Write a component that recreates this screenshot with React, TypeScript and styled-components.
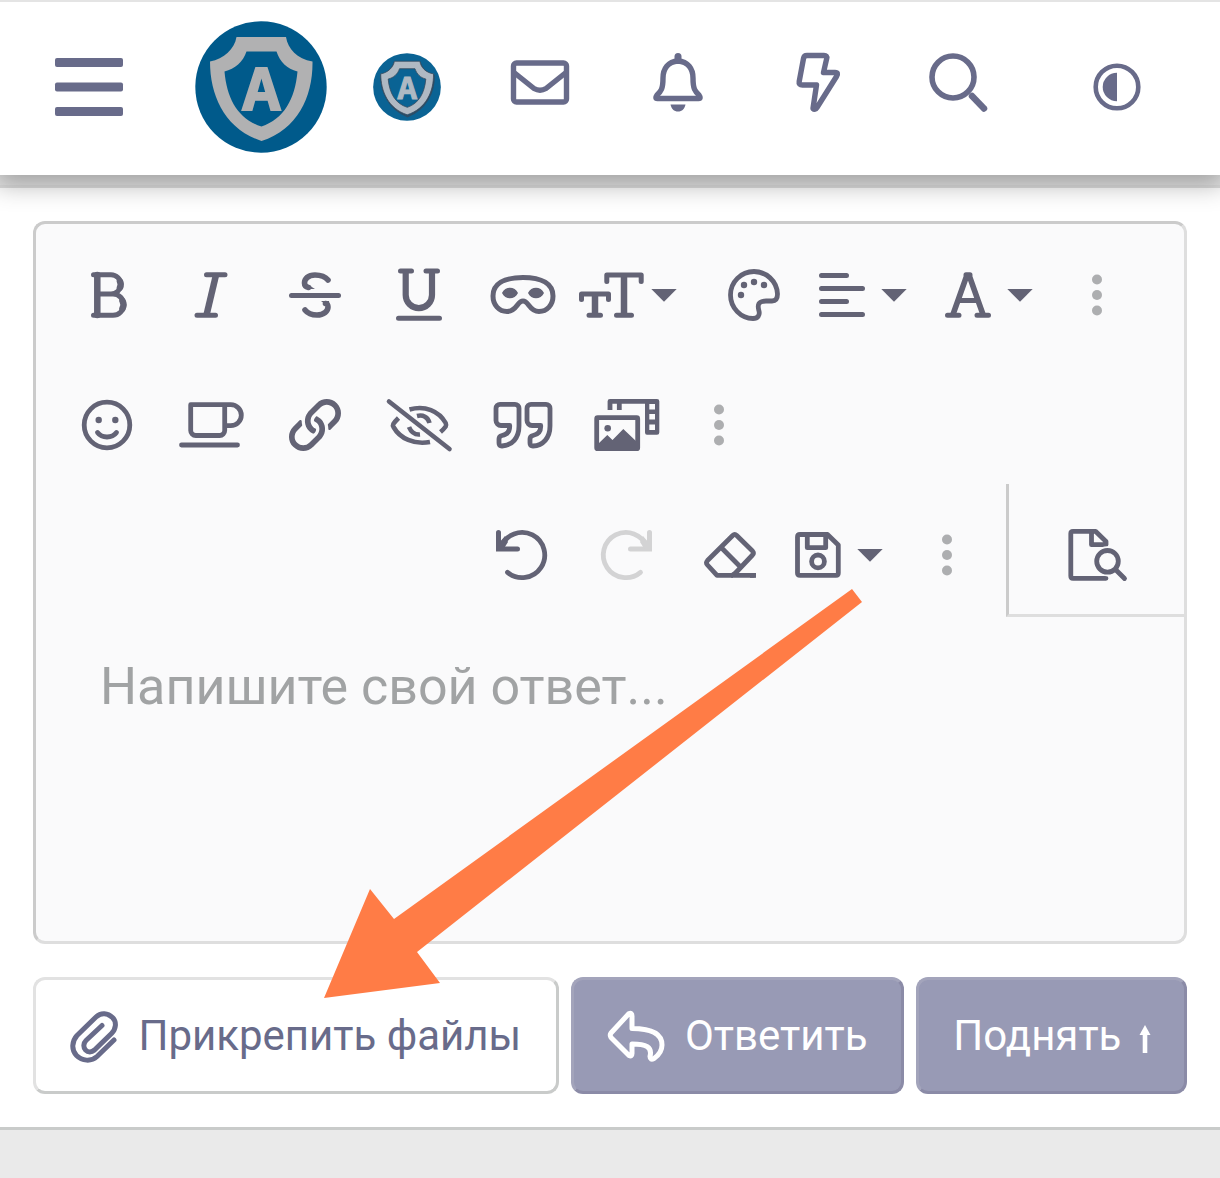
import React from 'react';
import styled, { createGlobalStyle } from 'styled-components';

const INK = '#636375';
const BRAND = '#686b8a';

const GlobalStyle = createGlobalStyle`
  * { box-sizing: border-box; }
  body {
    margin: 0;
    background: #eaeaea;
    font-family: Roboto, "Noto Sans", sans-serif;
  }
  button, textarea { font: inherit; margin: 0; padding: 0; border: 0; background: none; }
  button { cursor: pointer; }
`;

const Header = styled.header`
  position: relative;
  z-index: 1;
  display: flex;
  height: 175px;
  padding: 0 12px 3px 0;
  border-top: 2px solid #e4e4e4;
  background: #fff;
  box-shadow: 0 6px 24px 4px rgba(0, 0, 0, 0.3);
`;

const Slot = styled.div<{ $grow: number }>`
  flex: ${(p) => p.$grow} 1 0;
  display: flex;
  align-items: center;
  justify-content: center;
`;

const HeaderButton = styled.button`
  display: flex;
  color: ${BRAND};
`;

const HomeLink = styled.a`
  display: flex;
`;

const Strip = styled.div`
  height: 13px;
  border-bottom: 3px solid #dedede;
  background: #e6e6e6;
`;

const Composer = styled.main`
  position: relative;
  padding: 33px 33px 33px;
  border-bottom: 3px solid #c9cbca;
  background: #fff;
`;

const Editor = styled.section`
  display: flex;
  flex-direction: column;
  border: 3px solid;
  border-color: #cbcbcb #dedede #dedede #cbcbcb;
  border-radius: 12px;
  background: #fafafb;
`;

const ToolRow = styled.div<{ $height: number }>`
  display: flex;
  height: ${(p) => p.$height}px;
  padding: 6px 20px 0;
`;

const ActionRow = styled.div`
  display: flex;
  justify-content: flex-end;
  height: 133px;
`;

const ActionGroup = styled.div`
  display: flex;
  padding: 9px 20px 0 0;
`;

const Tool = styled.button<{ $muted?: boolean }>`
  display: flex;
  align-items: center;
  justify-content: center;
  width: 104px;
  color: ${(p) => (p.$muted ? '#d3d3d4' : INK)};
`;

const MenuTool = styled(Tool)`
  justify-content: flex-start;
  width: 126px;
`;

const MoreTool = styled(Tool)`
  width: 78px;
  color: #adaeb0;
`;

const PreviewTool = styled(Tool)`
  width: 178px;
  padding-top: 12px;
  border-left: 3px solid #cbcbcb;
  border-bottom: 3px solid #dedede;
`;

const Reply = styled.textarea`
  display: block;
  width: 100%;
  height: 324px;
  padding: 34px 64px;
  border: 0;
  outline: 0;
  resize: none;
  color: ${INK};
  font-size: 52px;
  line-height: 72px;
  &::placeholder { color: #a1a3a4; opacity: 1; }
`;

const Actions = styled.div`
  display: flex;
  gap: 12px;
  margin-top: 33px;
`;

const Action = styled.button<{ $grow: number; $primary?: boolean }>`
  flex: ${(p) => p.$grow} 1 0;
  display: flex;
  align-items: center;
  justify-content: center;
  gap: 20px;
  height: 117px;
  border: 3px solid;
  border-color: ${(p) => (p.$primary ? '#a3a4bb #8b8ba7 #8b8ba7 #a3a4bb' : '#e2e2e2 #c9cbca #c9cbca #e2e2e2')};
  border-radius: 12px;
  background: ${(p) => (p.$primary ? '#989ab5' : '#fff')};
  color: ${(p) => (p.$primary ? '#fff' : BRAND)};
  font-size: 42px;
  white-space: nowrap;
`;

const Pointer = styled.svg`
  position: absolute;
  top: 401px;
  left: 324px;
  pointer-events: none;
`;

type IconProps = { w?: number; h?: number; sw?: number; children: React.ReactNode };

const Icon = ({ w = 72, h = 64, sw = 4.8, children }: IconProps) => (
  <svg
    width={w}
    height={h}
    viewBox={`${-w / 2} ${-h / 2} ${w} ${h}`}
    fill="none"
    stroke="currentColor"
    strokeWidth={sw}
    strokeLinecap="round"
    strokeLinejoin="round"
    overflow="visible"
    aria-hidden="true"
  >
    {children}
  </svg>
);

const Caret = () => (
  <Icon w={32}>
    <path d="M-12.7 -6H12.7L0 6.7Z" fill="currentColor" stroke="none" />
  </Icon>
);

const Dots = () => (
  <Icon w={20}>
    <g fill="currentColor" stroke="none">
      <circle cx="0" cy="-15.5" r="5" />
      <circle cx="0" cy="0" r="5" />
      <circle cx="0" cy="15.5" r="5" />
    </g>
  </Icon>
);

const More = () => (
  <MoreTool type="button" aria-label="Ещё">
    <Dots />
  </MoreTool>
);

const Shield = ({ size, metal, shade }: { size: number; metal: string; shade?: boolean }) => (
  <svg width={size} height={size} viewBox="-66 -66 132 132" role="img" aria-label="A">
    <circle r="65.7" fill={shade ? '#0a6394' : '#005a8b'} />
    {shade && (
      <path
        d="M-24 -47H25C27 -36 38 -25 52 -22C53 10 36 43 1 57C-34 43 -50 10 -50 -22C-37 -25 -27 -36 -24 -47Z"
        fill="none"
        stroke="#2c4d66"
        strokeWidth="4"
      />
    )}
    <path
      fill={metal}
      stroke={shade ? '#34495c' : 'none'}
      strokeWidth="1.5"
      fillRule="evenodd"
      d="M-24.5 -50H25C27 -38 36 -28 51.5 -25.5C52 9 37 42 0.5 54C-36 42 -51 9 -51 -25.5C-37 -28 -26.5 -38 -24.5 -50ZM-14.5 -35.5C-18 -25 -26 -18 -36.5 -15.5C-34 12 -23 32 0.5 39.5C23 32 34 12 36.5 -15.5C26 -18 19 -25 15.5 -35.5Z"
    />
    <text
      x="0.5"
      y="23"
      textAnchor="middle"
      fontFamily='"Liberation Mono", monospace'
      fontWeight="700"
      fontSize="63"
      fill={metal}
      stroke={metal}
      strokeWidth="2"
    >
      A
    </text>
  </svg>
);

const LINK_HALF =
  'M314.222 197.78c51.091 51.091 54.377 132.287 9.75 187.16-6.242 7.73-2.784 3.865-84.94 86.02-54.696 54.696-143.266 54.745-197.99 0-54.711-54.69-54.734-143.255 0-197.99 32.773-32.773 51.835-51.899 63.409-63.457 7.463-7.452 20.331-2.354 20.486 8.192a173.31 173.31 0 0 0 4.746 37.828c.966 4.029-.272 8.269-3.202 11.198L80.632 312.57c-32.755 32.775-32.887 85.892 0 118.8 32.775 32.755 85.892 32.887 118.8 0l75.19-75.2c32.718-32.725 32.777-86.013 0-118.79a83.722 83.722 0 0 0-22.814-16.229c-4.623-2.233-7.182-7.25-6.561-12.346 1.356-11.122 6.296-21.885 14.815-30.405l4.375-4.375c3.625-3.626 9.177-4.594 13.76-2.294 12.999 6.524 25.187 15.211 36.025 26.049z';

const QUOTE =
  'M-24 -20.7H-9a4 4 0 0 1 4 4V1C-5 13 -12 20.5 -22 21C-24.5 21 -25 20 -25 18V14C-25 12 -24 11 -22 10.5C-17 9.5 -14.3 6 -14.3 1.5V0.5H-23a5 5 0 0 1 -5 -5V-16.7a4 4 0 0 1 4 -4Z';

const UndoShape = () => (
  <>
    <path d="M-21 -8A22.6 22.6 0 1 1 -14.5 17.3" />
    <path d="M-23.5 -22.5V-6H-4.5" strokeLinejoin="miter" strokeWidth="5" />
    <path d="M-23 -5L-23 -12L-17 -19L-14 -13L-19 -5Z" fill="currentColor" stroke="none" />
  </>
);

export default function App() {
  return (
    <>
      <GlobalStyle />
      <Header>
        <Slot $grow={178}>
          <HeaderButton type="button" aria-label="Меню">
            <Icon>
              <g fill="currentColor" stroke="none">
                <rect x="-34" y="-29" width="68" height="9" rx="2" />
                <rect x="-34" y="-4.5" width="68" height="9" rx="2" />
                <rect x="-34" y="20" width="68" height="9" rx="2" />
              </g>
            </Icon>
          </HeaderButton>
        </Slot>
        <Slot $grow={165}>
          <HomeLink href="#home">
            <Shield size={132} metal="#b1b1b2" />
          </HomeLink>
        </Slot>
        <Slot $grow={127}>
          <HeaderButton type="button" aria-label="Профиль">
            <Shield size={68} metal="#afb9c3" shade />
          </HeaderButton>
        </Slot>
        <Slot $grow={139}>
          <HeaderButton type="button" aria-label="Сообщения">
            <Icon sw={5.4}>
              <rect x="-26.5" y="-24" width="53" height="39" rx="3" />
              <path d="M-26 -14.5L-6 1.5Q0 5 6 1.5L26 -14.5" />
            </Icon>
          </HeaderButton>
        </Slot>
        <Slot $grow={139}>
          <HeaderButton type="button" aria-label="Уведомления">
            <Icon sw={5.4}>
              <path d="M-1 -26C-11 -25.5 -16 -18 -16 -9C-16 2 -18 4.5 -22 8Q-24.5 11.5 -21.5 11.5H19.5Q22.5 11.5 20 8C16 4.5 14 2 14 -9C14 -18 9 -25.5 -1 -26Z" />
              <path d="M-1 -30.5V-27" strokeWidth="7" />
              <path d="M-8.5 17.5H6.5C5.5 22 3 24.5 -1 24.5S-7.5 22 -8.5 17.5Z" fill="currentColor" stroke="none" />
            </Icon>
          </HeaderButton>
        </Slot>
        <Slot $grow={139}>
          <HeaderButton type="button" aria-label="Новое">
            <Icon sw={5.4}>
              <path d="M-11 -31.5H6Q9.5 -31.5 8.7 -28.5L5.5 -14.5H17Q21 -14.5 18.5 -10.5L-1 20.5Q-3 23.5 -5 21.5L-1.5 -2H-15.5Q-19.5 -2 -18.8 -5.5L-14.5 -28.5Q-14 -31.5 -11 -31.5Z" />
            </Icon>
          </HeaderButton>
        </Slot>
        <Slot $grow={139}>
          <HeaderButton type="button" aria-label="Поиск">
            <Icon sw={5.6}>
              <circle cx="-4" cy="-10" r="21" />
              <path d="M15 9L27 21.5" strokeWidth="6.5" />
            </Icon>
          </HeaderButton>
        </Slot>
        <Slot $grow={182}>
          <HeaderButton type="button" aria-label="Сменить тему">
            <Icon sw={4.6}>
              <circle r="21.3" />
              <path d="M0 -14.3V14.3A14.3 14.3 0 0 1 0 -14.3Z" fill="currentColor" stroke="none" />
            </Icon>
          </HeaderButton>
        </Slot>
      </Header>
      <Strip />
      <Composer>
        <Editor>
          <ToolRow $height={136}>
            <Tool type="button" aria-label="Жирный">
              <Icon sw={5}>
                <path d="M-14.5 -20.3H3A9.65 9.65 0 0 1 3 -1H-10M3 -1H5A10.65 10.65 0 0 1 5 20.3H-14.5" />
                <path d="M-10.7 -20V20M12 -13.5Q13.5 -10.5 12 -7.5M14.5 6Q16.5 9.5 14.5 13.5" strokeWidth="6.5" />
              </Icon>
            </Tool>
            <Tool type="button" aria-label="Курсив">
              <Icon sw={5}>
                <path d="M-5.5 -20.3H13M-15 20.3H3.5" />
                <path d="M4 -20L-5.5 20" strokeWidth="6.5" strokeLinecap="butt" />
              </Icon>
            </Tool>
            <Tool type="button" aria-label="Зачёркнутый">
              <Icon sw={5.6}>
                <path d="M-24.5 0.5H22.5" strokeWidth="5" />
                <path d="M12 -15C8 -20 3 -20 -1 -20C-8 -20 -11.5 -16 -11.5 -12C-11.5 -9.5 -10 -8 -7.5 -7.5" />
                <path d="M-11 15C-7 20 -2 20 1 20C8 20 12 16 12 12C12 9.5 11.5 9 9.5 8.5" />
                <path d="M-13 -12L-9 -6H-1L-9 -11ZM14 13L13 6H5L10 10Z" fill="currentColor" stroke="none" />
              </Icon>
            </Tool>
            <Tool type="button" aria-label="Подчёркнутый">
              <Icon sw={5}>
                <path d="M-19.5 -24H-8.5M6 -24H17.5M-21.5 23.3H19.5" />
                <path d="M-14.3 -23V0A13 13 0 0 0 12 0V-23" strokeWidth="6.2" />
              </Icon>
            </Tool>
            <Tool type="button" aria-label="Спойлер">
              <Icon sw={5}>
                <path d="M-1 -17.5C-20 -17.5 -31 -11 -31 1C-31 10 -25 16.5 -17 16.5C-7 16.5 -7 6 -1 6S5 16.5 15 16.5C23 16.5 29 10 29 1C29 -11 18 -17.5 -1 -17.5Z" />
                <path d="M-22 -2C-19 -9 -9 -9 -6 -2C-9 5 -19 5 -22 -2ZM4 -2C7 -9 17 -9 20 -2C17 5 7 5 4 -2Z" fill="currentColor" stroke="none" />
              </Icon>
            </Tool>
            <MenuTool type="button" aria-label="Размер шрифта">
              <Icon sw={5}>
                <path d="M-5.2 -13.5V-20H29.2V-13.5M4.5 20.3H19.5M-30.5 4.5V-1H-3.5V4.5M-23 20.3H-11.5" />
                <path d="M12 -20V20M-17 -1V20" strokeWidth="6.5" strokeLinecap="butt" />
              </Icon>
              <Caret />
            </MenuTool>
            <Tool type="button" aria-label="Цвет">
              <Icon>
                <path d="M0 -23.5A23.5 23.5 0 0 0 -23.5 0C-23.5 13 -13 23.5 -1 23.5C4 23.5 6 20 5 16C4 12 3.5 11 5 8.5C6.5 6 9 6 12 6H18C22 6 23.5 3 23.5 -1C23 -14 12 -23.5 0 -23.5Z" />
                <g fill="currentColor" stroke="none">
                  <circle cx="-13" cy="0" r="3.2" />
                  <circle cx="-10" cy="-10" r="3.2" />
                  <circle cx="0" cy="-13" r="3.2" />
                  <circle cx="10" cy="-10" r="3.2" />
                </g>
              </Icon>
            </Tool>
            <MenuTool type="button" aria-label="Выравнивание">
              <Icon sw={5}>
                <path d="M-20.5 -19.5H4.5M-20.5 -6.5H20.5M-20.5 6.5H4.5M-20.5 19.5H20.5" />
              </Icon>
              <Caret />
            </MenuTool>
            <MenuTool type="button" aria-label="Шрифт">
              <Icon sw={5}>
                <path d="M-20.5 20.3H-9M9 20.3H20.5M-9 5.5H9M-2 -20.3H2" />
                <path d="M-15.2 20L-1 -20M15.2 20L1 -20" strokeWidth="5.6" strokeLinecap="butt" />
              </Icon>
              <Caret />
            </MenuTool>
            <More />
          </ToolRow>
          <ToolRow $height={124}>
            <Tool type="button" aria-label="Смайлы">
              <Icon>
                <circle cx="-1" r="22.8" />
                <path d="M-10.5 7.5C-6 13.5 4 13.5 8.5 7.5" />
                <circle cx="-9.3" cy="-5" r="3.2" fill="currentColor" stroke="none" />
                <circle cx="7.3" cy="-5" r="3.2" fill="currentColor" stroke="none" />
              </Icon>
            </Tool>
            <Tool type="button" aria-label="Оффтоп">
              <Icon>
                <path d="M-21.3 -20.3H12.7V5.5A5 5 0 0 1 7.7 10.5H-16.3A5 5 0 0 1 -21.3 5.5ZM12.7 -20.3H18.8A10.5 10.5 0 0 1 18.8 0.7H12.7M-30.5 20H25.5" />
              </Icon>
            </Tool>
            <Tool type="button" aria-label="Ссылка">
              <Icon>
                <g transform="translate(-27 -26) scale(0.1016)" fill="currentColor" stroke="none">
                  <path d={LINK_HALF} />
                  <path d={LINK_HALF} transform="rotate(180 256 256)" />
                </g>
              </Icon>
            </Tool>
            <Tool type="button" aria-label="Скрытый текст">
              <Icon sw={4.6}>
                <path d="M-31 -23.5L29.5 24" />
                <g strokeLinecap="butt">
                  <path d="M-10.5 -15.5C5 -20 19 -14 25.7 -2Q26.5 0 25.7 1.5Q23.5 4.5 20.5 7" />
                  <path d="M-21.5 -7Q-25 -3.5 -26.7 -1Q-27.5 0.5 -26.5 2C-20 13.5 -6 20 10 17" />
                  <path d="M-3 -9C3 -10.5 8 -8 9.5 -2M-11 2C-9 7 -6 10 0 9.5" />
                </g>
              </Icon>
            </Tool>
            <Tool type="button" aria-label="Цитата">
              <Icon>
                <path d={QUOTE} />
                <path d={QUOTE} transform="translate(31 0)" />
              </Icon>
            </Tool>
            <Tool type="button" aria-label="Медиа">
              <Icon>
                <rect x="-31.3" y="-7.3" width="41" height="31" rx="1" />
                <path d="M-31 20L-20.7 10L-15.5 15L-4.7 4L9 17V24H-31Z" fill="currentColor" stroke="none" />
                <circle cx="-20.3" cy="3.3" r="3.3" fill="currentColor" stroke="none" />
                <path d="M-18 -15V-23.7H20M-8.7 -15V-23" strokeLinecap="butt" />
                <path
                  d="M17 -26H29Q31.3 -26 31.3 -23.7V7.5Q31.3 9.7 29 9.7H19Q17 9.7 17 7.5ZM21.3 -21V-15.5H27V-21ZM21.3 -11V-5.5H27V-11ZM21.3 -0.5V5H27V-0.5Z"
                  fill="currentColor"
                  fillRule="evenodd"
                  stroke="none"
                />
              </Icon>
            </Tool>
            <More />
          </ToolRow>
          <ActionRow>
            <ActionGroup>
              <Tool type="button" aria-label="Отменить">
                <Icon>
                  <UndoShape />
                </Icon>
              </Tool>
              <Tool type="button" aria-label="Повторить" $muted>
                <Icon>
                  <g transform="scale(-1 1)">
                    <UndoShape />
                  </g>
                </Icon>
              </Tool>
              <Tool type="button" aria-label="Очистить форматирование">
                <Icon>
                  <path d="M2.7 -19.5Q4.7 -21.5 6.7 -19.5L22.5 -4Q24.3 -2 22.5 0L5.5 18L2 20.5M2.7 -19.5L-22.5 5.5Q-24.5 7.7 -22.5 10L-13 20.4H23.5M-8.3 -7L10 11.5" />
                  <path d="M20 20.4H26" strokeLinecap="butt" />
                </Icon>
              </Tool>
              <MenuTool type="button" aria-label="Черновики">
                <Icon>
                  <path d="M-18 -20.5H9.5L20.3 -10V18Q20.3 20.4 18 20.4H-18Q-20.5 20.4 -20.5 18V-18Q-20.5 -20.5 -18 -20.5ZM-10.7 -20V-7.3H7.7V-20" />
                  <circle cx="0" cy="6.4" r="6.4" />
                </Icon>
                <Caret />
              </MenuTool>
              <More />
            </ActionGroup>
            <PreviewTool type="button" aria-label="Предпросмотр">
              <Icon>
                <path d="M9 23.3H-24Q-26.2 23.3 -26.2 21V-21.5Q-26.2 -23.7 -24 -23.7H-1.5L9 -13.5V-10.3H-5.5V-23" />
                <circle cx="10.5" cy="6.3" r="13.5" fill="#fafafb" stroke="#fafafb" strokeWidth="3" />
                <circle cx="10.5" cy="6.3" r="10.8" />
                <path d="M18.5 14.5L27.5 23.5" />
              </Icon>
            </PreviewTool>
          </ActionRow>
          <Reply aria-label="Ответ" placeholder="Напишите свой ответ..." />
        </Editor>
        <Actions>
          <Action type="button" $grow={529}>
            <Icon w={48} sw={5}>
              <path d="M20 4L3 20.5C-3 26 -12 25 -17.5 19.5S-22 5 -17 -0.5L2 -19C7 -24 14 -23 18.5 -18.5S22 -7 17.5 -2.5L0.5 14C-2.5 16.5 -6 16.5 -8.5 14S-10.5 7 -8 4.5L8 -10.5" />
            </Icon>
            Прикрепить файлы
          </Action>
          <Action type="button" $primary $grow={333}>
            <Icon w={58} sw={5}>
              <path d="M-7 -22.5Q-4 -23.5 -4 -20V-7.5C14 -7.5 26 -3 26 9C26 14 23 19 18 22.5Q14 24.5 14 20.5C16.5 11 10 8 -4 8V17.5Q-4 21 -7 19.5L-25 1.5Q-26.5 -1 -25 -3Z" />
            </Icon>
            Ответить
          </Action>
          <Action type="button" $primary $grow={270}>
            Поднять
            <Icon w={8} sw={4.6}>
              <path d="M0 -6V17" strokeLinecap="butt" />
              <path d="M-5.5 -1L0 -11L5.5 -1Z" fill="currentColor" stroke="none" />
            </Icon>
          </Action>
        </Actions>
        <Pointer width="540" height="410" viewBox="0 0 540 410" aria-hidden="true">
          <path d="M0 409L46 300L70 330L528 0L538 13L93 363L116 394Z" fill="#ff7c46" />
        </Pointer>
      </Composer>
    </>
  );
}
